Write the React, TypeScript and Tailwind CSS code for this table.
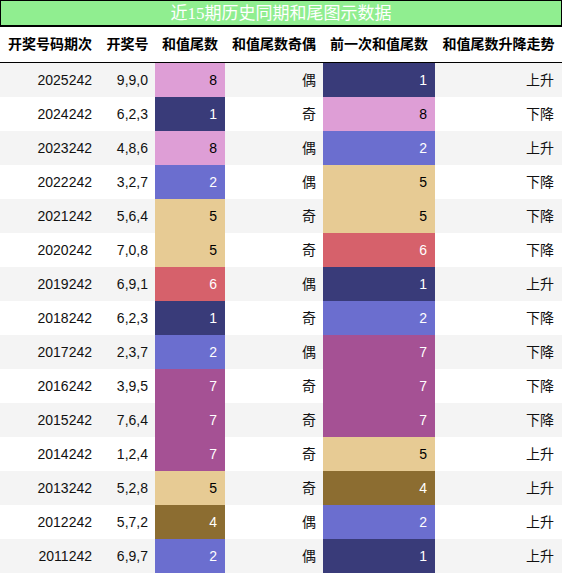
type Row = {
  issue: string;
  nums: string;
  tail: number;
  parity: string;
  prev: number;
  trend: string;
};

const rows: Row[] = [
  { issue: "2025242", nums: "9,9,0", tail: 8, parity: "偶", prev: 1, trend: "上升" },
  { issue: "2024242", nums: "6,2,3", tail: 1, parity: "奇", prev: 8, trend: "下降" },
  { issue: "2023242", nums: "4,8,6", tail: 8, parity: "偶", prev: 2, trend: "上升" },
  { issue: "2022242", nums: "3,2,7", tail: 2, parity: "偶", prev: 5, trend: "下降" },
  { issue: "2021242", nums: "5,6,4", tail: 5, parity: "奇", prev: 5, trend: "下降" },
  { issue: "2020242", nums: "7,0,8", tail: 5, parity: "奇", prev: 6, trend: "下降" },
  { issue: "2019242", nums: "6,9,1", tail: 6, parity: "偶", prev: 1, trend: "上升" },
  { issue: "2018242", nums: "6,2,3", tail: 1, parity: "奇", prev: 2, trend: "下降" },
  { issue: "2017242", nums: "2,3,7", tail: 2, parity: "偶", prev: 7, trend: "下降" },
  { issue: "2016242", nums: "3,9,5", tail: 7, parity: "奇", prev: 7, trend: "下降" },
  { issue: "2015242", nums: "7,6,4", tail: 7, parity: "奇", prev: 7, trend: "下降" },
  { issue: "2014242", nums: "1,2,4", tail: 7, parity: "奇", prev: 5, trend: "上升" },
  { issue: "2013242", nums: "5,2,8", tail: 5, parity: "奇", prev: 4, trend: "上升" },
  { issue: "2012242", nums: "5,7,2", tail: 4, parity: "偶", prev: 2, trend: "上升" },
  { issue: "2011242", nums: "6,9,7", tail: 2, parity: "偶", prev: 1, trend: "上升" },
];

// tail digit -> cell colour (full class names so tailwind picks them up)
const digitClass: Record<number, string> = {
  1: "bg-[#393b79] text-white",
  2: "bg-[#6b6ecf] text-white",
  4: "bg-[#8c6d31] text-white",
  5: "bg-[#e7cb94] text-black",
  6: "bg-[#d6616b] text-white",
  7: "bg-[#a55194] text-white",
  8: "bg-[#de9ed6] text-black",
};

const headers = ["开奖号码期次", "开奖号", "和值尾数", "和值尾数奇偶", "前一次和值尾数", "和值尾数升降走势"];

const grid = "grid grid-cols-[100px_55px_70px_98px_112px_127px]";

export default function App() {
  return (
    <div className="w-[562px] h-[574px] bg-white font-['Liberation_Sans','Noto_Sans_CJK_SC',sans-serif] text-[14px] text-[#111]">
      <div className="h-[27px] border border-b-2 border-black bg-[#90ee90] flex items-center justify-center text-white text-[17px] leading-none font-['Liberation_Serif','Noto_Sans_CJK_SC',serif]">
        近15期历史同期和尾图示数据
      </div>
      <div className={`${grid} h-[36px] border-b border-black font-bold text-[14px] text-black`}>
        {headers.map((h) => (
          <div key={h} className="flex items-center justify-center whitespace-nowrap">
            {h}
          </div>
        ))}
      </div>
      {rows.map((r, i) => (
        <div key={r.issue} className={`${grid} h-[34px] ${i % 2 === 0 ? "bg-[#f4f4f4]" : "bg-white"}`}>
          <div className="flex items-center justify-end pr-[8px]">{r.issue}</div>
          <div className="flex items-center justify-end pr-[7px]">{r.nums}</div>
          <div className={`flex items-center justify-end pr-[8px] ${digitClass[r.tail]}`}>{r.tail}</div>
          <div className="flex items-center justify-end pr-[7px]">{r.parity}</div>
          <div className={`flex items-center justify-end pr-[8px] ${digitClass[r.prev]}`}>{r.prev}</div>
          <div className="flex items-center justify-end pr-[8px]">{r.trend}</div>
        </div>
      ))}
    </div>
  );
}
